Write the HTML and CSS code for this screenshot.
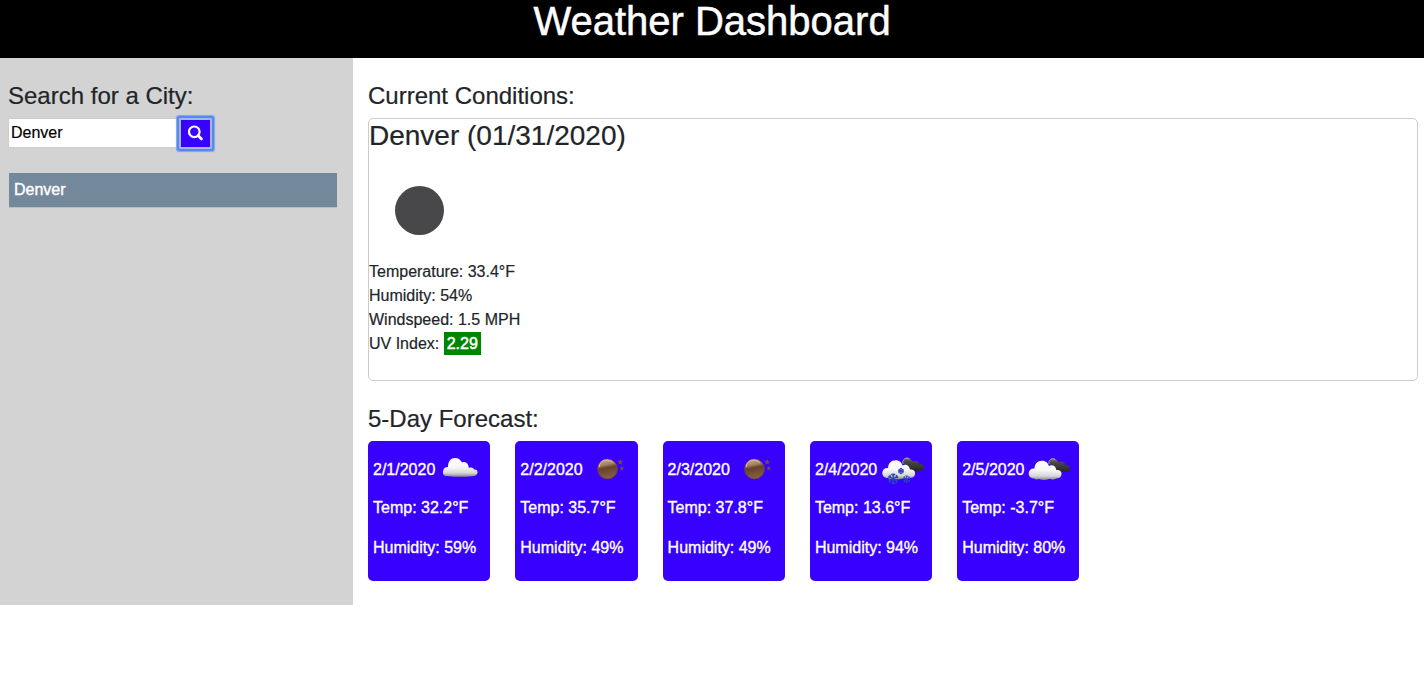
FILE: index.html
```html
<!DOCTYPE html>
<html lang="en">
<head>
<meta charset="utf-8">
<title>Weather Dashboard</title>
<link rel="stylesheet" href="styles.css">
</head>
<body>
<svg class="defs" width="0" height="0" aria-hidden="true">
  <defs>
    <linearGradient id="white" x1="0" y1="0" x2="0" y2="1"><stop offset="0" stop-color="#fff"/><stop offset=".5" stop-color="#f7f7f7"/><stop offset=".8" stop-color="#d6d6d6"/><stop offset="1" stop-color="#888"/></linearGradient>
    <linearGradient id="dark" x1="0" y1="0" x2="0" y2="1"><stop offset="0" stop-color="#777"/><stop offset=".3" stop-color="#484848"/><stop offset="1" stop-color="#242424"/></linearGradient>
    <linearGradient id="moon" x1=".3" y1="0" x2=".5" y2="1"><stop offset="0" stop-color="#d0b09a"/><stop offset=".3" stop-color="#a57c5e"/><stop offset=".45" stop-color="#65422a"/><stop offset="1" stop-color="#8a6040"/></linearGradient>
    <path id="dark-cloud" d="M26 22C24 17 28 14 31.500 16C33.500 17 34 19 35.500 19C39 18 41 20 41.500 22C44 21.500 46 23 46 25.500C46 28 44 29 42 28.500C39 30.500 36 28 33 28C29 28 26 26 26 22Z"/>
    <path id="white-cloud" d="M10 35.500C6.500 35.500 4.500 33 4.700 30C5 27 7.500 25 10.500 25.500C10.500 21 13.500 17.700 18 17.700C22 17.700 24 20 25 23C28 21 32 23 32.300 27C36 26.500 38 29 37.500 31.500C37 34.500 34.500 35.500 32 35.500C30 37 27 36.500 26 35.800C22 37.500 18 37 15 36C13 36.700 11.500 36.500 10 35.500Z"/>
    <path id="flake" d="M0-5V5M-4.300-2.500L4.300 2.500M-4.300 2.500L4.300-2.500M-1.700-4.500L0-3L1.700-4.500M-1.700 4.500L0 3L1.700 4.500M-4.700-.8L-2.600-1.500L-3-3.700M4.700.8L2.600 1.500L3 3.700M-4.700.8L-2.600 1.500L-3 3.700M4.700-.8L2.600-1.500L3-3.700"/>
    <path id="star" d="M0-3L.9-1L3-.8L1.300.6L2 2.700L0 1.500L-2 2.700L-1.300.6L-3-.8L-.9-1Z"/>
    <g id="night">
      <circle cx="24.500" cy="26" r="9.900" fill="url(#moon)" stroke="#6b4a3a" stroke-width=".8"/>
      <path d="M16.200 24C16.700 16.500 24.700 15 29.700 19.500" fill="none" stroke="#dbc0ac" stroke-width="1"/>
      <use href="#star" x="37.200" y="19" fill="#744c43"/>
      <use href="#star" transform="translate(38.800 25.300) scale(.8)" fill="#744c43"/>
    </g>
  </defs>
</svg>
<header class="banner"><h1>Weather Dashboard</h1></header>
<main class="layout">
  <aside class="sidebar">
    <h4>Search for a City:</h4>
    <form class="search">
      <input class="search-input" type="text" value="Denver" aria-label="City">
      <button class="search-button" type="button" aria-label="Search">
        <svg width="16" height="16" viewBox="0 0 16 16"><circle cx="6.300" cy="6.800" r="5.300" fill="none" stroke="#fff" stroke-width="2.200"/><path d="M10.300 10.800L13.500 14" stroke="#fff" stroke-width="2.700" stroke-linecap="round"/></svg>
      </button>
    </form>
    <div class="history">Denver</div>
  </aside>
  <section class="content">
    <h4>Current Conditions:</h4>
    <div class="current">
      <h3>Denver (01/31/2020)</h3>
      <svg class="current-icon" width="100" height="100" viewBox="0 0 100 100"><circle cx="50.500" cy="50.500" r="24.500" fill="#48484a"/></svg>
      <p>Temperature: 33.4°F</p>
      <p>Humidity: 54%</p>
      <p>Windspeed: 1.5 MPH</p>
      <p>UV Index: <span class="uv">2.29</span></p>
    </div>
    <h4>5-Day Forecast:</h4>
    <div class="forecast">
      <article class="card">
        <div class="date">2/1/2020<svg class="icon" viewBox="0 0 50 50"><path fill="url(#white)" d="M11 33C8 32.500 7.500 30 8.200 27.500C8.800 25 10.500 24 13 24C13 18 16 15 20 15C23.500 15 25.500 17 27 19.500C30.500 18 33.500 20.500 33.800 25C36.500 24 38.500 25 39 26.500C41.500 26 43 28 42.500 30C42 32 40.500 33 38.500 33C35.500 34 15.500 34 11 33Z"/></svg></div>
        <p>Temp: 32.2°F</p><p>Humidity: 59%</p>
      </article>
      <article class="card">
        <div class="date">2/2/2020<svg class="icon" viewBox="0 0 50 50"><use href="#night"/></svg></div>
        <p>Temp: 35.7°F</p><p>Humidity: 49%</p>
      </article>
      <article class="card">
        <div class="date">2/3/2020<svg class="icon" viewBox="0 0 50 50"><use href="#night"/></svg></div>
        <p>Temp: 37.8°F</p><p>Humidity: 49%</p>
      </article>
      <article class="card">
        <div class="date">2/4/2020<svg class="icon" viewBox="0 0 50 50"><use href="#dark-cloud" x="1" y="-.8" fill="url(#dark)"/><path d="M26 21C25 16 29 14 32 16" fill="none" stroke="#aaa"/><use href="#white-cloud" x=".6" y="-.5" fill="url(#white)"/><g fill="none" stroke="#2945b8"><use href="#flake" transform="translate(16.200 35.800) scale(1.080)" stroke-width="1.200"/><use href="#flake" transform="translate(24 28) scale(.6)" stroke-width="1.900"/><use href="#flake" transform="translate(29.700 36.200) scale(.75)" stroke-width="1.300"/></g></svg></div>
        <p>Temp: 13.6°F</p><p>Humidity: 94%</p>
      </article>
      <article class="card">
        <div class="date">2/5/2020<svg class="icon" viewBox="0 0 50 50"><use href="#dark-cloud" fill="url(#dark)"/><path d="M25 21C24 17 28 14.500 31 16.500" fill="none" stroke="#aaa"/><use href="#white-cloud" fill="url(#white)"/></svg></div>
        <p>Temp: -3.7°F</p><p>Humidity: 80%</p>
      </article>
    </div>
  </section>
</main>
</body>
</html>
```
FILE: styles.css
```css
* { box-sizing: border-box; }
body { margin: 0; background: #fff; color: #212529; font: 16px/24px "Liberation Sans", Arial, sans-serif; -webkit-text-stroke: .2px currentColor; }
.defs { position: absolute; }
h1, h3, h4, p { margin: 0; font-weight: 400; }
h4 { font-size: 24px; line-height: 29px; margin-bottom: 8px; }
.banner { height: 58px; background: #000; color: #fff; text-align: center; }
.banner h1 { font-size: 40px; line-height: 42px; -webkit-text-stroke: .5px #fff; }
.layout { display: grid; grid-template-columns: 353px 1fr; height: 547px; }
.sidebar { background: #d3d3d3; padding: 23px 16px 0 8px; }
.search { display: flex; align-items: flex-start; height: 31px; margin-bottom: 24px; }
.search-input { width: 171px; height: 30px; border: 1px solid #ccc; border-right: 0; padding: 2px; font: inherit; color: #000; background: #fff; outline: 0; }
.search-button { display: flex; align-items: center; justify-content: center; width: 33px; height: 31px; padding: 0; border: 2px solid #5f8cee; background: #3700ff; border-radius: 3px; box-shadow: inset 0 0 0 1px #b6bce0, 0 0 0 1px #5f8cee, 0 0 1px 2px #7fa3eb; }
.search-button { border-color: #a5b6e3; box-shadow: 0 0 0 2px #5589f0, 0 0 1px 2.500px #7fa3eb; border-radius: 1px; }
.search-button svg { position: relative; top: -1px; }
.history { margin-left: 1px; height: 35px; padding: 5px; background: #74889c; border-bottom: 1px solid #b5bdc5; color: #fff; -webkit-text-stroke: .4px #fff; }
.content { padding: 23px 6px 0 15px; }
.current { height: 263px; margin-bottom: 23px; border: 1px solid #ccc; border-radius: 5px; }
.current h3 { font-size: 28px; line-height: 34px; margin-bottom: 7px; }
.current-icon { display: block; }
.uv { display: inline-block; height: 23px; line-height: 23px; padding: 0 3px; background: #008500; color: #fff; -webkit-text-stroke: .5px #fff; }
.forecast { display: flex; gap: 25px; }
.card { flex: 0 0 122.300px; height: 140px; padding: 2px 5px 0; border-radius: 5px; background: #3700ff; color: #fff; -webkit-text-stroke: .35px #fff; }
.date { display: flex; height: 53px; line-height: 54px; }
.icon { flex: 0 0 50px; height: 50px; }
.card p { margin-bottom: 16px; }
```
